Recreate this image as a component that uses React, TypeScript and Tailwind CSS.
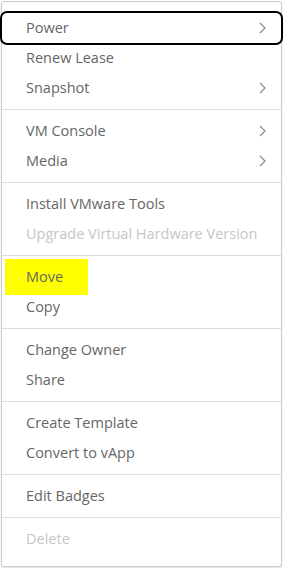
import React from "react";

type Item = { label: string; sub?: boolean; disabled?: boolean; focused?: boolean; marked?: boolean };

const groups: Item[][] = [
  [{ label: "Power", sub: true, focused: true }, { label: "Renew Lease" }, { label: "Snapshot", sub: true }],
  [{ label: "VM Console", sub: true }, { label: "Media", sub: true }],
  [{ label: "Install VMware Tools" }, { label: "Upgrade Virtual Hardware Version", disabled: true }],
  [{ label: "Move", marked: true }, { label: "Copy" }],
  [{ label: "Change Owner" }, { label: "Share" }],
  [{ label: "Create Template" }, { label: "Convert to vApp" }],
  [{ label: "Edit Badges" }],
  [{ label: "Delete", disabled: true }],
];

function Chevron() {
  return (
    <svg width="7" height="12" viewBox="0 0 7 12" className="ml-auto mr-[15px] shrink-0">
      <polyline points="1,1 6,6 1,11" fill="none" stroke="#8a8a8a" strokeWidth="1.2" />
    </svg>
  );
}

function MenuRow({ item }: { item: Item }) {
  return (
    <div
      className={`flex h-[30px] items-center pl-[24px] text-[14.5px] ${
        item.disabled ? "text-[#c6c6c6]" : "text-[#666666]"
      } ${item.focused ? "rounded-[5px] outline-2 outline-black" : ""}`}
    >
      {item.marked ? (
        <span className="-ml-[21px] flex h-[36px] w-[83px] shrink-0 items-center bg-[#ffff00] pl-[21px]">
          {item.label}
        </span>
      ) : (
        <span className="whitespace-nowrap">{item.label}</span>
      )}
      {item.sub && <Chevron />}
    </div>
  );
}

export default function App() {
  return (
    <div className="flex h-[568px] w-[285px] items-start bg-white pl-px pt-px" style={{ fontFamily: "'Open Sans', sans-serif" }}>
      <div className="flex w-[281px] flex-col rounded-[3px] border border-[#cccccc] bg-white pt-[11px] pb-[12px] shadow-[0_1px_2px_rgba(0,0,0,0.12)]">
        {groups.map((g, i) => (
          <div key={i}>
            {i > 0 && <div className="my-[6px] h-px bg-[#dddddd]" />}
            {g.map((item) => (
              <MenuRow key={item.label} item={item} />
            ))}
          </div>
        ))}
      </div>
    </div>
  );
}
